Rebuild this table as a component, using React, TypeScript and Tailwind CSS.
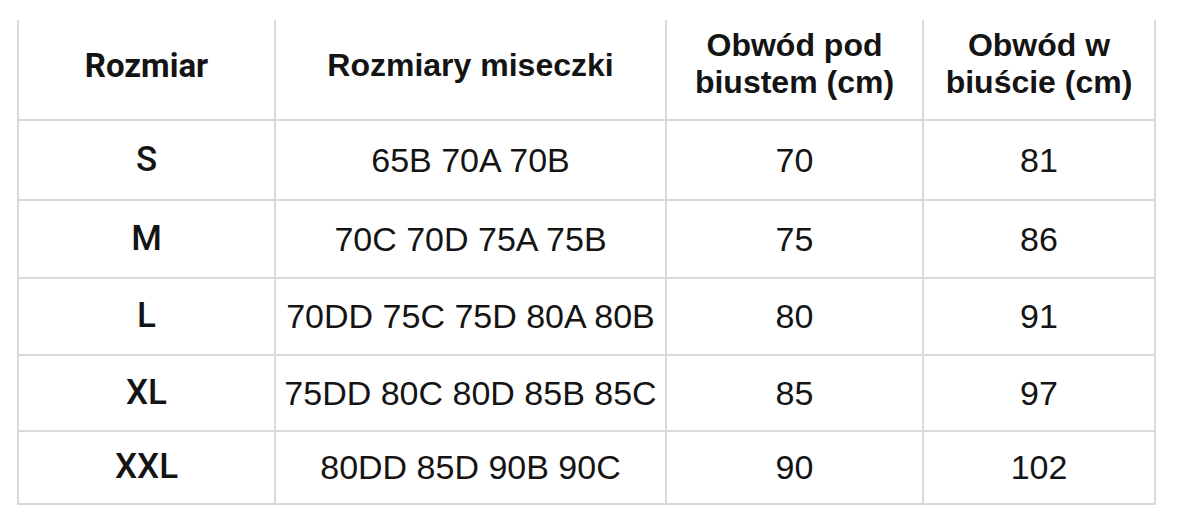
const rows = [
  { size: "S", cups: "65B 70A 70B", under: "70", bust: "81", h: "h-[80px]" },
  { size: "M", cups: "70C 70D 75A 75B", under: "75", bust: "86", h: "h-[78px]" },
  { size: "L", cups: "70DD 75C 75D 80A 80B", under: "80", bust: "91", h: "h-[77px]" },
  { size: "XL", cups: "75DD 80C 80D 85B 85C", under: "85", bust: "97", h: "h-[76px]" },
  { size: "XXL", cups: "80DD 85D 90B 90C", under: "90", bust: "102", h: "h-[73px]" },
];

const cell = "flex items-center justify-center border-r-2 border-b-2 border-[#d9d9d9] text-center";

const App = () => {
  return (
    <div className="w-[1204px] h-[516px] bg-white pt-[20px] pl-[17px] text-[#141414]">
      <div className="w-[1139px] border-l-2 border-[#d9d9d9]">
        {/* header */}
        <div className="flex h-[101px] font-['Liberation_Sans',Arial,sans-serif] font-bold text-[32px] leading-[37px]">
          <div className={`${cell} w-[257px] pb-[8px] font-['Roboto',sans-serif] text-[33px]`}>Rozmiar</div>
          <div className={`${cell} w-[391px] pb-[8px]`}>Rozmiary miseczki</div>
          <div className={`${cell} w-[257px] pb-[12px]`}>
            Obwód pod
            <br />
            biustem (cm)
          </div>
          <div className={`${cell} w-[232px] pb-[12px]`}>
            Obwód w
            <br />
            biuście (cm)
          </div>
        </div>
        {rows.map((r) => (
          <div key={r.size} className={`flex ${r.h} text-[34px] font-['Liberation_Sans',Arial,sans-serif]`}>
            <div className={`${cell} w-[257px] font-['Roboto',sans-serif] font-medium text-[35px]`}>{r.size}</div>
            <div className={`${cell} w-[391px]`}>{r.cups}</div>
            <div className={`${cell} w-[257px]`}>{r.under}</div>
            <div className={`${cell} w-[232px]`}>{r.bust}</div>
          </div>
        ))}
      </div>
    </div>
  );
};

export default App;
